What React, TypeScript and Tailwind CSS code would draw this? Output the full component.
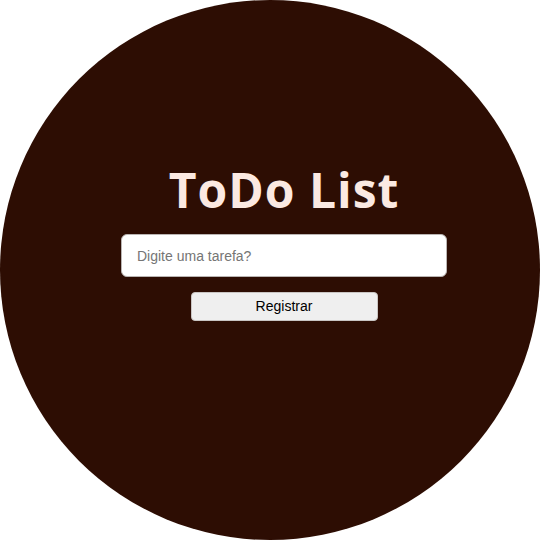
export default function App() {
  return (
    <div className="flex h-[540px] w-[540px] items-center justify-center bg-white">
      <div className="flex h-[540px] w-[540px] flex-col items-center rounded-full bg-[#2d0d03] pt-[158px]">
        <div className="ml-[28px] flex flex-col items-center">
          {/* title */}
          <h1 className="font-['Open_Sans',sans-serif] text-[48px] font-bold leading-[64px] tracking-[1px] text-[#fbe9e2]">
            ToDo List
          </h1>

          {/* form */}
          <form className="mt-[12px] flex flex-col items-center gap-[15px]">
            <input
              type="text"
              placeholder="Digite uma tarefa?"
              className="h-[43px] w-[326px] rounded-[6px] border border-[#b9b4b2] bg-white px-[15px] font-['Liberation_Sans',sans-serif] text-[14px] text-black placeholder:text-[#757575] outline-none"
            />
            <button
              type="button"
              className="h-[29px] w-[187px] rounded-[4px] border border-[#c9c5c3] bg-[#efefef] font-['Liberation_Sans',sans-serif] text-[14px] text-black"
            >
              Registrar
            </button>
          </form>
        </div>
      </div>
    </div>
  );
}
